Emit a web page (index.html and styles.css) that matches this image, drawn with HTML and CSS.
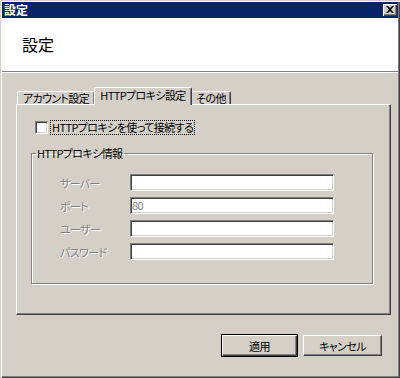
FILE: index.html
```html
<!DOCTYPE html>
<html lang="ja">
<head>
<meta charset="utf-8">
<title>設定</title>
<link rel="stylesheet" href="styles.css">
</head>
<body>
<div class="window">
  <div class="titlebar">
    <span class="title">設定</span>
    <span class="close">
      <svg width="8" height="7" viewBox="0 0 8 7"><path d="M0 0h2l2 2 2-2h2L5 3.5 8 7H6L4 5 2 7H0l3-3.5z" fill="#000"/></svg>
    </span>
  </div>
  <div class="header">設定</div>
  <div class="content">
    <div class="tabs">
      <div class="tab t1">アカウント設定</div>
      <div class="tab active">HTTPプロキシ設定</div>
      <div class="tab t3">その他</div>
    </div>
    <div class="panel">
      <div class="check-row">
        <span class="checkbox"></span>
        <span class="check-label">HTTPプロキシを使って接続する</span>
      </div>
      <fieldset class="group">
        <legend class="legend">HTTPプロキシ情報</legend>
        <div class="row"><span class="label">サーバー</span><span class="input"></span></div>
        <div class="row"><span class="label">ポート</span><span class="input">80</span></div>
        <div class="row"><span class="label">ユーザー</span><span class="input"></span></div>
        <div class="row"><span class="label">パスワード</span><span class="input"></span></div>
      </fieldset>
    </div>
    <div class="buttons">
      <div class="btn default"><span class="btn-inner">適用</span></div>
      <div class="btn cancel"><span class="btn-inner">キャンセル</span></div>
    </div>
  </div>
</div>
</body>
</html>
```
FILE: styles.css
```css
* { box-sizing: border-box; }
html, body { margin: 0; padding: 0; background: #d4d0c8; }
body {
  font-family: "Noto Sans CJK JP", "Noto Sans", sans-serif;
  font-size: 11px;
  letter-spacing: -0.6px;
  font-feature-settings: "palt";
  color: #000;
}
.window {
  width: 400px;
  height: 378px;
  padding: 2px;
  background: #d4d0c8;
  box-shadow: inset 1px 1px 0 #d4d0c8, inset 2px 2px 0 #fff, inset -1px -1px 0 #404040, inset -2px -2px 0 #808080;
  display: flex;
  flex-direction: column;
}
.titlebar {
  height: 16px;
  background: #0a246a;
  display: flex;
  align-items: center;
  justify-content: space-between;
  padding: 0 1px 0 2px;
}
.title {
  color: #fff;
  font-weight: bold;
  font-size: 12px;
  letter-spacing: 0;
  line-height: 16px;
}
.close {
  width: 14px;
  height: 12px;
  background: #d4d0c8;
  box-shadow: inset 1px 1px 0 #fff, inset -1px -1px 0 #404040, inset -2px -2px 0 #808080;
  display: flex;
  align-items: center;
  justify-content: center;
  padding: 0 1px 1px 0;
}
.close svg { display: block; }
.header {
  height: 54px;
  background: #fff;
  border-bottom: 1px solid #808080;
  box-shadow: 0 1px 0 #fff;
  display: flex;
  align-items: center;
  padding-left: 20px;
  font-size: 16px;
  letter-spacing: 0;
  padding-bottom: 2px;
}
.content {
  padding: 15px 6px 0 14px;
}
.tabs {
  display: flex;
  align-items: flex-end;
  height: 17px;
  padding-left: 1px;
}
.tab {
  height: 13px;
  line-height: 12px;
  border-top: 1px solid #fff;
  border-left: 1px solid #fff;
  border-right: 1px solid #404040;
  box-shadow: inset -1px 0 0 #808080;
  border-radius: 2px 2px 0 0;
  text-align: center;
  white-space: nowrap;
}
.t1 { width: 78px; }
.t3 { width: 40px; }
.tab.active {
  width: 98px;
  height: 18px;
  line-height: 15px;
  margin: 0 -1px -1px -1px;
  background: #d4d0c8;
  position: relative;
  z-index: 1;
}
.panel {
  width: 375px;
  height: 211px;
  border-top: 1px solid #fff;
  border-left: 1px solid #fff;
  border-right: 1px solid #404040;
  border-bottom: 1px solid #404040;
  box-shadow: inset -1px -1px 0 #808080;
  padding: 14px 0 0 14px;
}
.check-row {
  display: flex;
  align-items: center;
  height: 16px;
  margin-left: 4px;
}
.checkbox {
  width: 13px;
  height: 13px;
  background: #fff;
  border-top: 1px solid #808080;
  border-left: 1px solid #808080;
  border-right: 1px solid #fff;
  border-bottom: 1px solid #fff;
  box-shadow: inset 1px 1px 0 #404040, inset -1px -1px 0 #d4d0c8;
  margin-right: 3px;
}
.check-label {
  line-height: 13px;
  padding: 0 1px;
  outline: 1px dotted #000;
  white-space: nowrap;
}
.group {
  margin: 11px 0 0 0;
  padding: 0 0 23px 0;
  width: 342px;
  border: 1px solid #808080;
  box-shadow: inset 1px 1px 0 #fff, 1px 1px 0 #fff;
  min-width: 0;
}
.legend {
  padding: 0 1px;
  margin-left: 4px;
  line-height: 14px;
}
.row {
  display: flex;
  align-items: center;
  height: 17px;
  margin: 6px 0 0 28px;
}
.row:first-of-type { margin-top: 14px; }
.label {
  width: 70px;
  color: #808080;
  text-shadow: 1px 1px 0 #fff;
  white-space: nowrap;
}
.input {
  width: 204px;
  height: 17px;
  background: #fff;
  border-top: 1px solid #808080;
  border-left: 1px solid #808080;
  border-right: 1px solid #fff;
  border-bottom: 1px solid #fff;
  box-shadow: inset 1px 1px 0 #404040, inset -1px -1px 0 #d4d0c8;
  color: #808080;
  line-height: 14px;
  padding-left: 1px;
}
.buttons {
  display: flex;
  justify-content: flex-end;
  gap: 5px;
  margin-top: 19px;
  padding-right: 10px;
}
.btn {
  height: 23px;
  display: flex;
}
.btn-inner {
  flex: 1;
  display: flex;
  align-items: center;
  justify-content: center;
  border-top: 1px solid #fff;
  border-left: 1px solid #fff;
  border-right: 1px solid #404040;
  border-bottom: 1px solid #404040;
  box-shadow: inset -1px -1px 0 #808080;
}
.default { width: 77px; border: 1px solid #000; }
.cancel { width: 79px; padding: 1px 0; }
```
